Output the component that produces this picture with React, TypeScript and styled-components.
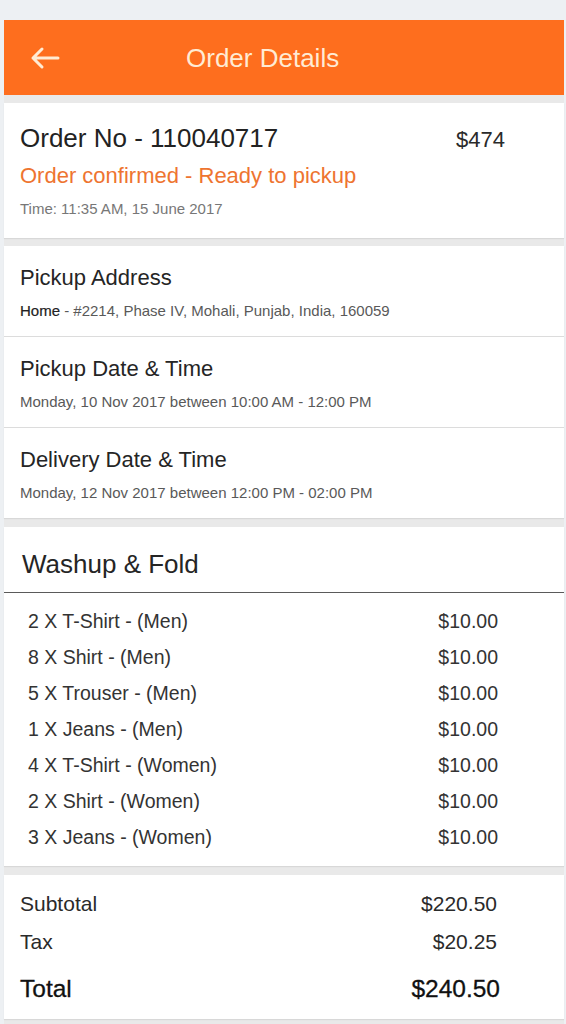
import React from "react";
import styled, { createGlobalStyle } from "styled-components";

const GlobalStyle = createGlobalStyle`
  html, body {
    margin: 0;
    padding: 0;
    background: #edf0f3;
  }
  body {
    font-family: "Liberation Sans", Arial, sans-serif;
    -webkit-font-smoothing: antialiased;
  }
`;

const Screen = styled.div`
  margin: 20px 0 0 4px;
  width: 560px;
  min-height: 1004px;
  background: #e9e9e9;
  display: flex;
  flex-direction: column;
`;

const Header = styled.header`
  height: 75px;
  background: #fe6e1e;
  display: flex;
  align-items: center;
  padding-left: 26px;
  box-sizing: border-box;
`;

const BackButton = styled.button`
  border: 0;
  background: transparent;
  padding: 0;
  width: 34px;
  height: 26px;
  display: flex;
  align-items: center;
  cursor: pointer;
`;

const Title = styled.h1`
  margin: 0 0 0 122px;
  font-size: 26px;
  font-weight: 400;
  line-height: 32px;
  color: #ffebd4;
`;

const Card = styled.section<{ $gap: number }>`
  margin-top: ${(p) => p.$gap}px;
  background: #fff;
  box-shadow: 0 1px 1px rgba(0, 0, 0, 0.07);
`;

const SummaryCard = styled(Card)`
  padding: 19px 59px 19px 16px;
`;

const TopLine = styled.div`
  display: flex;
  justify-content: space-between;
  align-items: baseline;
`;

const OrderNo = styled.div`
  font-size: 26px;
  line-height: 32px;
  color: #222;
`;

const OrderAmount = styled.div`
  font-size: 22px;
  line-height: 32px;
  color: #2a2a2a;
`;

const Status = styled.div`
  margin-top: 6px;
  font-size: 22px;
  line-height: 28px;
  color: #ee7430;
`;

const TimeText = styled.div`
  margin-top: 9px;
  font-size: 15px;
  line-height: 20px;
  color: #777;
`;

const InfoRow = styled.div`
  padding: 18px 20px 15px 16px;
  & + & {
    border-top: 1px solid #dcdcdc;
  }
`;

const InfoTitle = styled.div`
  font-size: 22px;
  line-height: 28px;
  color: #252525;
`;

const InfoText = styled.div`
  margin-top: 9px;
  font-size: 15px;
  line-height: 20px;
  color: #595959;
`;

const Strong = styled.span`
  color: #222;
  -webkit-text-stroke: 0.2px #222;
`;

const SectionHead = styled.div`
  padding: 21px 20px 12px 18px;
  border-bottom: 1px solid #5a5a5a;
  font-size: 26px;
  line-height: 32px;
  color: #252525;
`;

const ItemList = styled.ul`
  list-style: none;
  margin: 0;
  padding: 10px 66px 11px 24px;
`;

const ItemRow = styled.li`
  display: flex;
  justify-content: space-between;
  font-size: 19.5px;
  line-height: 36px;
  color: #333;
`;

const TotalsCard = styled(Card)`
  padding: 10px 67px 8px 16px;
`;

const TotalRow = styled.div<{ $big?: boolean }>`
  display: flex;
  justify-content: space-between;
  font-size: ${(p) => (p.$big ? "24.5px" : "21px")};
  line-height: ${(p) => (p.$big ? "44px" : "38px")};
  margin-top: ${(p) => (p.$big ? "6px" : "0")};
  margin-right: ${(p) => (p.$big ? "-3px" : "0")};
  color: ${(p) => (p.$big ? "#111" : "#2a2a2a")};
  ${(p) => (p.$big ? "-webkit-text-stroke: 0.3px #111;" : "")}
`;

const ArrowIcon = () => (
  <svg width="30" height="24" viewBox="0 0 30 24" fill="none">
    <path
      d="M28 12H3M12 3L3 12l9 9"
      stroke="#ffebd4"
      strokeWidth="3"
      strokeLinecap="round"
      strokeLinejoin="round"
    />
  </svg>
);

const items = [
  ["2 X T-Shirt - (Men)", "$10.00"],
  ["8 X Shirt - (Men)", "$10.00"],
  ["5 X Trouser - (Men)", "$10.00"],
  ["1 X Jeans - (Men)", "$10.00"],
  ["4 X T-Shirt - (Women)", "$10.00"],
  ["2 X Shirt - (Women)", "$10.00"],
  ["3 X Jeans - (Women)", "$10.00"],
];

export default function App() {
  return (
    <>
      <GlobalStyle />
      <Screen>
        <Header>
          <BackButton aria-label="Back">
            <ArrowIcon />
          </BackButton>
          <Title>Order Details</Title>
        </Header>

        <SummaryCard $gap={8}>
          <TopLine>
            <OrderNo>Order No - 110040717</OrderNo>
            <OrderAmount>$474</OrderAmount>
          </TopLine>
          <Status>Order confirmed - Ready to pickup</Status>
          <TimeText>Time: 11:35 AM, 15 June 2017</TimeText>
        </SummaryCard>

        <Card $gap={8}>
          <InfoRow>
            <InfoTitle>Pickup Address</InfoTitle>
            <InfoText>
              <Strong>Home</Strong> - #2214, Phase IV, Mohali, Punjab, India, 160059
            </InfoText>
          </InfoRow>
          <InfoRow>
            <InfoTitle>Pickup Date &amp; Time</InfoTitle>
            <InfoText>Monday, 10 Nov 2017 between 10:00 AM - 12:00 PM</InfoText>
          </InfoRow>
          <InfoRow>
            <InfoTitle>Delivery Date &amp; Time</InfoTitle>
            <InfoText>Monday, 12 Nov 2017 between 12:00 PM - 02:00 PM</InfoText>
          </InfoRow>
        </Card>

        <Card $gap={9}>
          <SectionHead>Washup &amp; Fold</SectionHead>
          <ItemList>
            {items.map(([name, price]) => (
              <ItemRow key={name}>
                <span>{name}</span>
                <span>{price}</span>
              </ItemRow>
            ))}
          </ItemList>
        </Card>

        <TotalsCard $gap={9}>
          <TotalRow>
            <span>Subtotal</span>
            <span>$220.50</span>
          </TotalRow>
          <TotalRow>
            <span>Tax</span>
            <span>$20.25</span>
          </TotalRow>
          <TotalRow $big>
            <span>Total</span>
            <span>$240.50</span>
          </TotalRow>
        </TotalsCard>
      </Screen>
    </>
  );
}
